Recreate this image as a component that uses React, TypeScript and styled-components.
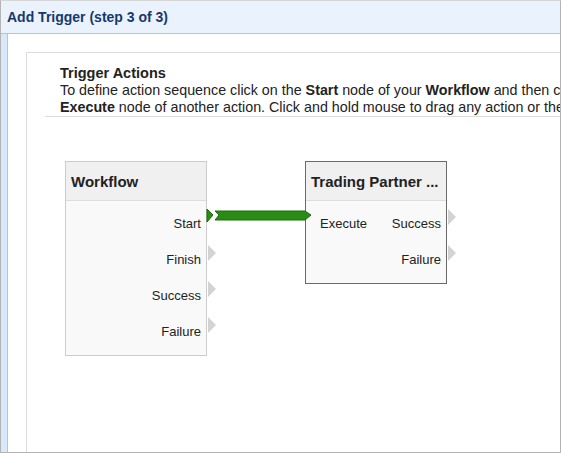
import React from 'react'
import styled, { createGlobalStyle } from 'styled-components'

const GlobalStyle = createGlobalStyle`
    html, body {
        margin: 0;
        padding: 0;
        background: #ffffff;
    }
    body {
        font-family: "Liberation Sans", Arial, sans-serif;
        font-size: 13px;
        color: #222222;
    }
`

const Window = styled.div`
    width: 561px;
    height: 453px;
    box-sizing: border-box;
    border: 1px solid #b4b4b4;
    border-top-color: #d6d6d6;
    display: flex;
    flex-direction: column;
    overflow: hidden;
`
const Header = styled.div`
    height: 32px;
    flex-shrink: 0;
    display: flex;
    align-items: center;
    padding-left: 6px;
    background: #eaf2fe;
    border-bottom: 1px solid #a9c5ef;
`
const Title = styled.span`
    font-size: 14px;
    font-weight: bold;
    color: #17386a;
`
const Body = styled.div`
    flex: 1;
    display: flex;
    min-height: 0;
`
const SideStrip = styled.div`
    width: 6px;
    flex-shrink: 0;
    background: #d9e7fb;
    border-right: 1px solid #a9c5ef;
`
const Content = styled.div`
    flex: 1;
    padding: 18px 0 0 18px;
    display: flex;
    min-width: 0;
`
const Panel = styled.div`
    flex: 1;
    border-top: 1px solid #dddddd;
    border-left: 1px solid #dddddd;
    display: flex;
    flex-direction: column;
    overflow: hidden;
`
const Intro = styled.div`
    margin: 0 0 0 18px;
    padding: 12px 0 0 15px;
    border-bottom: 1px solid #dddddd;
    font-size: 14.3px;
    line-height: 17px;
    white-space: nowrap;
`
const IntroHeading = styled.div`
    font-size: 14.5px;
    font-weight: bold;
`
const Canvas = styled.div`
    flex: 1;
    position: relative;
`
const Connections = styled.svg`
    position: absolute;
    left: 0;
    top: 0;
    width: 100%;
    height: 100%;
    overflow: visible;
`
const Node = styled.div<{ $x: number; $y: number; $selected?: boolean }>`
    position: absolute;
    left: ${p => p.$x}px;
    top: ${p => p.$y}px;
    width: 140px;
    border: 1px solid ${p => (p.$selected ? '#6a6a6a' : '#cccccc')};
    background: #f9f9f9;
`
const NodeHeader = styled.div`
    height: 38px;
    display: flex;
    align-items: center;
    padding-left: 5px;
    background: #f0f0f0;
    border-bottom: 1px solid #dddddd;
    font-size: 15px;
    font-weight: bold;
    white-space: nowrap;
`
const NodeBody = styled.div`
    padding: 4px 0 6px;
`
const Row = styled.div`
    height: 36px;
    display: flex;
    align-items: center;
    justify-content: space-between;
    position: relative;
`
const Label = styled.span<{ $side: 'left' | 'right' }>`
    margin-left: ${p => (p.$side === 'left' ? '14px' : 'auto')};
    margin-right: ${p => (p.$side === 'right' ? '5px' : '0')};
`
const Port = styled.span<{ $active?: boolean }>`
    position: absolute;
    right: -10px;
    top: 4px;
    width: 0;
    height: 0;
    border-top: 8px solid transparent;
    border-bottom: 8px solid transparent;
    border-left: 8px solid ${p => (p.$active ? '#2a8c14' : '#d3d3d3')};
`

type NodeRow = { left?: string; right?: string; active?: boolean }

const workflowRows: NodeRow[] = [
    { right: 'Start', active: true },
    { right: 'Finish' },
    { right: 'Success' },
    { right: 'Failure' },
]

const partnerRows: NodeRow[] = [
    { left: 'Execute', right: 'Success' },
    { right: 'Failure' },
]

const ActionNode = ({ title, rows, x, y, selected }: { title: string; rows: NodeRow[]; x: number; y: number; selected?: boolean }) => (
    <Node $x={x} $y={y} $selected={selected}>
        <NodeHeader>{title}</NodeHeader>
        <NodeBody>
            {rows.map((r, i) => (
                <Row key={i}>
                    {r.left && <Label $side="left">{r.left}</Label>}
                    {r.right && <Label $side="right">{r.right}</Label>}
                    {r.right && !r.active && <Port />}
                </Row>
            ))}
        </NodeBody>
    </Node>
)

const App = () => {
    return (
        <>
            <GlobalStyle />
            <Window>
                <Header>
                    <Title>Add Trigger (step 3 of 3)</Title>
                </Header>
                <Body>
                    <SideStrip />
                    <Content>
                        <Panel>
                            <Intro>
                                <IntroHeading>Trigger Actions</IntroHeading>
                                To define action sequence click on the <b>Start</b> node of your <b>Workflow</b> and then click on the
                                <br />
                                <b>Execute</b> node of another action. Click and hold mouse to drag any action or the workflow.
                            </Intro>
                            <Canvas>
                                <ActionNode title="Workflow" rows={workflowRows} x={38} y={44} />
                                <ActionNode title="Trading Partner ..." rows={partnerRows} x={278} y={44} selected />
                                <Connections>
                                    <polygon points="180,92 186,98 180,105" fill="#2a8c14" stroke="#1c6a0b" strokeWidth="1" />
                                    <polygon points="188,94 278,94 284,98 278,103 188,103 192,98" fill="#2a8c14" stroke="#1c6a0b" strokeWidth="1" />
                                </Connections>
                            </Canvas>
                        </Panel>
                    </Content>
                </Body>
            </Window>
        </>
    )
}

export default App
